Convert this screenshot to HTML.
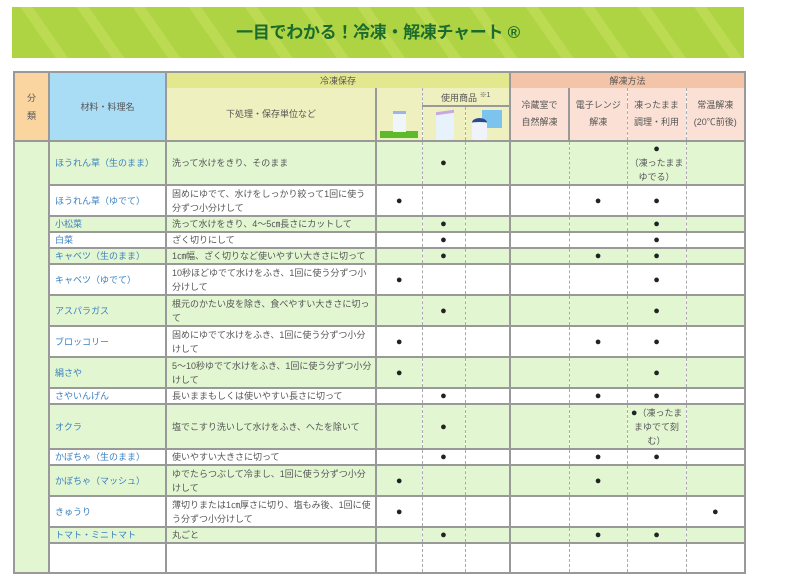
<!DOCTYPE html>
<html><head><meta charset="utf-8"><style>
body{margin:0;background:#fff;width:787px;height:547px;overflow:hidden;font-family:"Liberation Sans","Noto Sans CJK JP",sans-serif;}
.ban{position:absolute;left:12px;top:7px;width:732px;height:51px;background:repeating-linear-gradient(55deg,#aed444 0 36px,#bcdb53 36px 46px);}
.ban div{text-align:center;line-height:51px;font-size:17px;font-weight:bold;color:#1b6b2c;letter-spacing:-0.3px}
table{position:absolute;left:13px;top:71px;border-collapse:collapse;table-layout:fixed;width:731px;font-size:9px;color:#555;}
td{border:2px solid #999;padding:0;line-height:14px;letter-spacing:0;overflow:hidden;white-space:normal}
.d{border-left:1px dashed #aaa;border-right:1px dashed #aaa;text-align:center}
tr td:last-child{border-right:2px solid #999}
.n{color:#3a80c0;padding-left:5px}
.s{padding-left:5px;padding-right:2px}
tr.g td{background:#e2f6d2}
tr.w td{background:#fff}
td.cat{background:#e2f6d2 !important}
.b{font-size:11px;color:#222}
.hc{text-align:center}
</style></head><body>
<div class="ban"><div>一目でわかる！冷凍・解凍チャート ®</div></div>
<table>
<colgroup><col style="width:35px"><col style="width:117px"><col style="width:210px"><col style="width:46px"><col style="width:43px"><col style="width:45px"><col style="width:59px"><col style="width:58px"><col style="width:59px"><col style="width:59px"></colgroup>
<tr style="height:16px">
<td rowspan="3" class="hc" style="background:#fbd5a0;line-height:18px">分<br>類</td>
<td rowspan="3" class="hc" style="background:#a9dcf5">材料・料理名</td>
<td colspan="4" class="hc" style="background:#e3e88f;border-bottom:none">冷凍保存</td>
<td colspan="4" class="hc" style="background:#f4c4a8;border-bottom:none">解凍方法</td></tr>
<tr style="height:18px">
<td rowspan="2" class="hc" style="background:#eef0bf;border-top:none">下処理・保存単位など</td>
<td rowspan="2" class="d" style="background:#eef0bf;border-top:none;border-left:1px dashed #aaa;border-bottom:2px solid #999;position:relative"><div style="position:absolute;left:3px;bottom:2px;width:38px;height:7px;background:#5cbb2a"></div><div style="position:absolute;left:16px;bottom:8px;width:13px;height:18px;background:#eef6fb;border-top:3px solid #9ab6e8"></div></td>
<td colspan="2" class="hc" style="background:#eef0bf;border-top:none;border-bottom:1px dashed #aaa;border-left:none">使用商品 <sup style="font-size:7px">※1</sup></td>
<td rowspan="2" class="hc" style="background:#fbe0d5;border-top:none;line-height:17px">冷蔵室で<br>自然解凍</td>
<td rowspan="2" class="d" style="background:#fbe0d5;border-top:none;border-bottom:2px solid #999;line-height:17px">電子レンジ<br>解凍</td>
<td rowspan="2" class="d" style="background:#fbe0d5;border-top:none;border-bottom:2px solid #999;line-height:17px">凍ったまま<br>調理・利用</td>
<td rowspan="2" class="d" style="background:#fbe0d5;border-top:none;border-bottom:2px solid #999;border-right:2px solid #999;line-height:17px">常温解凍<br>(20℃前後)</td></tr>
<tr style="height:35px">
<td class="d" style="background:#eef0bf;position:relative"><div style="position:absolute;left:13px;top:4px;width:18px;height:26px;background:#e8f2fb;border-top:3px solid #c9a7e0;transform:skewY(-8deg)"></div></td>
<td class="d" style="background:#eef0bf;position:relative;border-right:2px solid #999"><div style="position:absolute;left:16px;top:3px;width:20px;height:18px;background:#7cc4ee"></div><div style="position:absolute;left:6px;top:11px;width:15px;height:20px;background:#f0f4fa;border-top:4px solid #2a4b8c;border-radius:50%/20%"></div></td></tr>

<tr class="g" style="height:43px"><td rowspan="16" class="cat"></td><td class="n">ほうれん草（生のまま）</td><td class="s">洗って水けをきり、そのまま</td><td class="d"></td><td class="d b">●</td><td class="d" style="border-right:2px solid #999"></td><td class="d"></td><td class="d"></td><td class="d"><span class="b">●</span><br>（凍ったまま<br>ゆでる）</td><td class="d"></td></tr>
<tr class="w" style="height:31px"><td class="n">ほうれん草（ゆでて）</td><td class="s">固めにゆでて、水けをしっかり絞って1回に使う分ずつ小分けして</td><td class="d b">●</td><td class="d"></td><td class="d" style="border-right:2px solid #999"></td><td class="d"></td><td class="d b">●</td><td class="d b">●</td><td class="d"></td></tr>
<tr class="g" style="height:16px"><td class="n">小松菜</td><td class="s">洗って水けをきり、4～5㎝長さにカットして</td><td class="d"></td><td class="d b">●</td><td class="d" style="border-right:2px solid #999"></td><td class="d"></td><td class="d"></td><td class="d b">●</td><td class="d"></td></tr>
<tr class="w" style="height:16px"><td class="n">白菜</td><td class="s">ざく切りにして</td><td class="d"></td><td class="d b">●</td><td class="d" style="border-right:2px solid #999"></td><td class="d"></td><td class="d"></td><td class="d b">●</td><td class="d"></td></tr>
<tr class="g" style="height:16px"><td class="n">キャベツ（生のまま）</td><td class="s" style="white-space:nowrap">1㎝幅、ざく切りなど使いやすい大きさに切って</td><td class="d"></td><td class="d b">●</td><td class="d" style="border-right:2px solid #999"></td><td class="d"></td><td class="d b">●</td><td class="d b">●</td><td class="d"></td></tr>
<tr class="w" style="height:31px"><td class="n">キャベツ（ゆでて）</td><td class="s">10秒ほどゆでて水けをふき、1回に使う分ずつ小分けして</td><td class="d b">●</td><td class="d"></td><td class="d" style="border-right:2px solid #999"></td><td class="d"></td><td class="d"></td><td class="d b">●</td><td class="d"></td></tr>
<tr class="g" style="height:31px"><td class="n">アスパラガス</td><td class="s">根元のかたい皮を除き、食べやすい大きさに切って</td><td class="d"></td><td class="d b">●</td><td class="d" style="border-right:2px solid #999"></td><td class="d"></td><td class="d"></td><td class="d b">●</td><td class="d"></td></tr>
<tr class="w" style="height:31px"><td class="n">ブロッコリー</td><td class="s">固めにゆでて水けをふき、1回に使う分ずつ小分けして</td><td class="d b">●</td><td class="d"></td><td class="d" style="border-right:2px solid #999"></td><td class="d"></td><td class="d b">●</td><td class="d b">●</td><td class="d"></td></tr>
<tr class="g" style="height:31px"><td class="n">絹さや</td><td class="s">5～10秒ゆでて水けをふき、1回に使う分ずつ小分けして</td><td class="d b">●</td><td class="d"></td><td class="d" style="border-right:2px solid #999"></td><td class="d"></td><td class="d"></td><td class="d b">●</td><td class="d"></td></tr>
<tr class="w" style="height:16px"><td class="n">さやいんげん</td><td class="s">長いままもしくは使いやすい長さに切って</td><td class="d"></td><td class="d b">●</td><td class="d" style="border-right:2px solid #999"></td><td class="d"></td><td class="d b">●</td><td class="d b">●</td><td class="d"></td></tr>
<tr class="g" style="height:45px"><td class="n">オクラ</td><td class="s">塩でこすり洗いして水けをふき、へたを除いて</td><td class="d"></td><td class="d b">●</td><td class="d" style="border-right:2px solid #999"></td><td class="d"></td><td class="d"></td><td class="d"><span class="b">●</span>（凍ったま<br>まゆでて刻<br>む）</td><td class="d"></td></tr>
<tr class="w" style="height:16px"><td class="n">かぼちゃ（生のまま）</td><td class="s">使いやすい大きさに切って</td><td class="d"></td><td class="d b">●</td><td class="d" style="border-right:2px solid #999"></td><td class="d"></td><td class="d b">●</td><td class="d b">●</td><td class="d"></td></tr>
<tr class="g" style="height:31px"><td class="n">かぼちゃ（マッシュ）</td><td class="s">ゆでたらつぶして冷まし、1回に使う分ずつ小分けして</td><td class="d b">●</td><td class="d"></td><td class="d" style="border-right:2px solid #999"></td><td class="d"></td><td class="d b">●</td><td class="d"></td><td class="d"></td></tr>
<tr class="w" style="height:31px"><td class="n">きゅうり</td><td class="s">薄切りまたは1㎝厚さに切り、塩もみ後、1回に使う分ずつ小分けして</td><td class="d b">●</td><td class="d"></td><td class="d" style="border-right:2px solid #999"></td><td class="d"></td><td class="d"></td><td class="d"></td><td class="d b">●</td></tr>
<tr class="g" style="height:16px"><td class="n">トマト・ミニトマト</td><td class="s">丸ごと</td><td class="d"></td><td class="d b">●</td><td class="d" style="border-right:2px solid #999"></td><td class="d"></td><td class="d b">●</td><td class="d b">●</td><td class="d"></td></tr>
<tr class="w" style="height:30px"><td class="n"></td><td class="s"></td><td class="d"></td><td class="d"></td><td class="d" style="border-right:2px solid #999"></td><td class="d"></td><td class="d"></td><td class="d"></td><td class="d"></td></tr>
</table>
</body></html>
